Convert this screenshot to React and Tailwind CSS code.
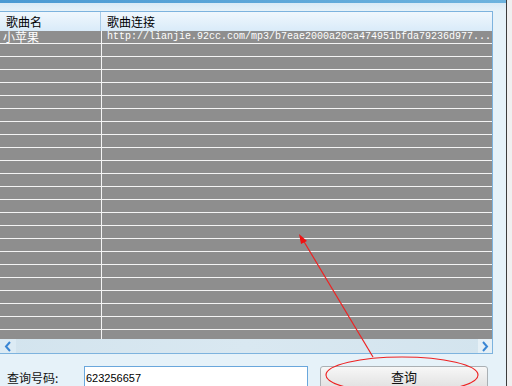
import React from "react";

const cjk = { fontFamily: '"Noto Sans CJK SC", "Liberation Sans", sans-serif' };
const mono = { fontFamily: '"Liberation Mono", "DejaVu Sans Mono", monospace' };

const rows = [
  { name: "小苹果", url: "http://lianjie.92cc.com/mp3/b7eae2000a20ca474951bfda79236d977..." },
];
for (let i = 0; i < 23; i++) rows.push({ name: "", url: "" });

function Chevron({ dir }) {
  const pts = dir === "left" ? "6,1 2,5.5 6,10" : "2,1 6,5.5 2,10";
  return (
    <svg width="8" height="11" viewBox="0 0 8 11">
      <polyline points={pts} fill="none" stroke="#3a86d4" strokeWidth="2" />
    </svg>
  );
}

export default function App() {
  return (
    <div className="relative flex h-[386px] w-[512px] overflow-hidden bg-[#f2f2f2]">
      <div className="flex h-full w-[506px] shrink-0 flex-col overflow-hidden bg-[#e6f2f9]">
        <div className="h-[3px] shrink-0 bg-gradient-to-r from-[#4a9ad3] to-[#6db3de]" />
        <div className="h-[8px] shrink-0 bg-gradient-to-b from-[#d8eaf6] to-[#e6f2f9]" />

        <div className="mr-[13px] flex shrink-0 flex-col border-b border-r border-t border-[#7db3de]">
          <div className="flex h-[19px] shrink-0 bg-gradient-to-b from-[#f0f7fd] to-[#d9ebf9] text-[12px] leading-[19px] text-black" style={cjk}>
            <div className="w-[101px] border-r border-[#a8cbe8] pl-[6px]">歌曲名</div>
            <div className="flex-1 pl-[6px]">歌曲连接</div>
          </div>

          <div className="h-[308px] shrink-0 overflow-hidden bg-[#8e8e8e]">
            {rows.map((r, i) => (
              <div key={i} className="flex h-[13px] border-b border-[#f4f4f4] text-white">
                <div className="w-[102px] border-r border-[#f4f4f4] pl-[3px] text-[12px] leading-[12px]" style={cjk}>
                  {r.name}
                </div>
                <div className="flex-1 overflow-hidden whitespace-nowrap pl-[5px] text-[10px] leading-[12px]" style={mono}>
                  {r.url}
                </div>
              </div>
            ))}
          </div>

          <div className="flex h-[14px] shrink-0 bg-gradient-to-r from-[#d3e4ee] via-[#d9e8f1] to-[#d3e4ee]">
            <div className="flex w-[16px] items-center justify-center bg-[#dcebf4]">
              <Chevron dir="left" />
            </div>
            <div className="flex-1" />
            <div className="flex w-[14px] items-center justify-center bg-[#e6f0f6]">
              <Chevron dir="right" />
            </div>
          </div>
        </div>

        <div className="flex shrink-0 pt-[12px]">
          <div className="flex h-[24px] w-[84px] shrink-0 items-center pl-[7px] text-[12px] text-[#111]" style={cjk}>
            查询号码:
          </div>
          <div
            className="h-[26px] w-[224px] shrink-0 border border-[#6aa7dc] bg-white pl-[1px] pt-[6px] text-[11px] leading-[11px] text-black"
            style={{ fontFamily: '"Liberation Sans", sans-serif' }}
          >
            623256657
          </div>
          <button
            className="ml-[12px] h-[26px] w-[168px] shrink-0 rounded-[3px] border border-[#aab0b4] bg-gradient-to-b from-[#f7f7f7] to-[#dedede] pb-[4px] text-[13px] text-[#111]"
            style={cjk}
          >
            查询
          </button>
        </div>
      </div>
      <div className="w-px shrink-0 bg-[#3c3c3c]" />
      <div className="flex-1 bg-[#f0f0f0]" />

      <svg className="pointer-events-none absolute left-0 top-0" width="512" height="386">
        <ellipse cx="402" cy="375" rx="76" ry="18" fill="none" stroke="#ee2222" strokeWidth="1.2" />
        <line x1="373" y1="357" x2="303" y2="240" stroke="#ee2222" strokeWidth="1.2" />
        <polygon points="299,234 307,241 301,244" fill="#ee1111" />
      </svg>
    </div>
  );
}
